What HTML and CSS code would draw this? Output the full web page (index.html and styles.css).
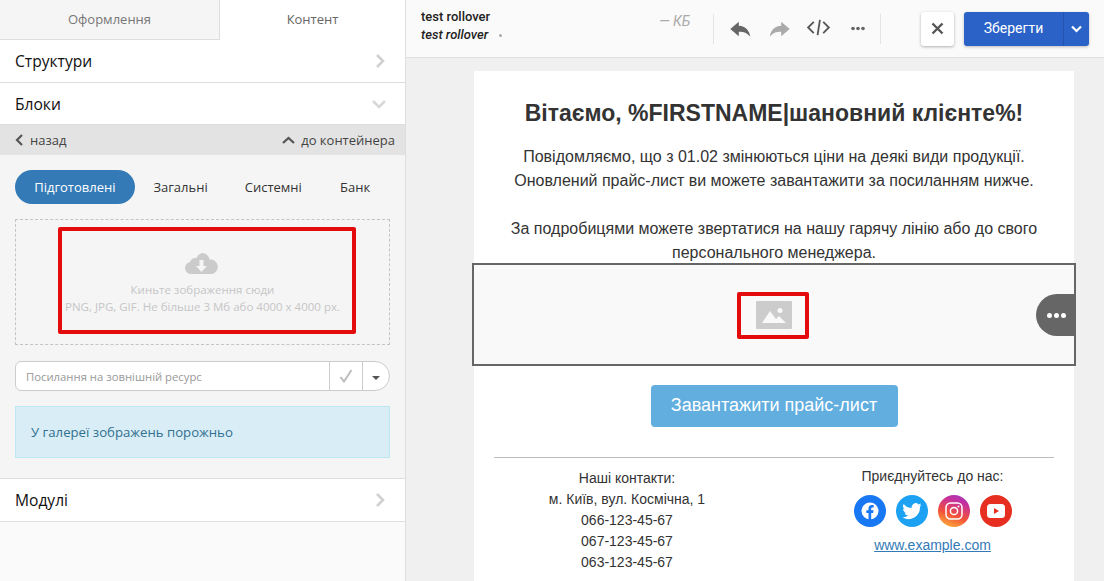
FILE: index.html
```html
<!DOCTYPE html>
<html lang="uk">
<head>
  <meta charset="UTF-8">
  <meta name="viewport" content="width=device-width, initial-scale=1.0">
  <title>Редактор листа</title>
  <link rel="stylesheet" href="styles.css">
</head>
<body>
  <div class="app">
    <aside class="sidebar">
      <div class="tabs">
        <div class="tab">Оформлення</div>
        <div class="tab tab-active">Контент</div>
      </div>

      <div class="section-row">
        <span>Структури</span>
        <svg class="row-arrow" width="12" height="16" viewBox="0 0 12 16"><path d="M3 2l6 6-6 6" fill="none" stroke="#d0d0d0" stroke-width="2.6"/></svg>
      </div>
      <div class="section-row section-open">
        <span>Блоки</span>
        <svg class="row-arrow" width="14" height="12" viewBox="0 0 14 12"><path d="M1 3l6 6 6-6" fill="none" stroke="#d8d8d8" stroke-width="2.6"/></svg>
      </div>

      <div class="nav-bar">
        <span class="nav-item">
          <svg width="9" height="12" viewBox="0 0 9 12"><path d="M7 1L2 6l5 5" fill="none" stroke="#555" stroke-width="2.2"/></svg>
          назад
        </span>
        <span class="nav-item">
          <svg width="13" height="9" viewBox="0 0 13 9"><path d="M1 7l5.5-5L12 7" fill="none" stroke="#555" stroke-width="2.2"/></svg>
          до контейнера
        </span>
      </div>

      <div class="panel">
        <div class="pills">
          <div class="pill pill-active">Підготовлені</div>
          <div class="pill pill-general">Загальні</div>
          <div class="pill pill-system">Системні</div>
          <div class="pill pill-bank">Банк</div>
        </div>

        <div class="dropzone">
          <svg class="cloud" width="33" height="21" viewBox="0 0 33 21">
            <path d="M6 21a6 6 0 0 1-1-11.900A6 6 0 0 1 11.500 5 8 8 0 0 1 17 0a7.500 7.500 0 0 1 7.500 6.500A7.300 7.300 0 0 1 26.500 21z" fill="#cbcbcb"/>
            <path d="M14.500 7h4v6H22l-5.500 6-5.500-6h3.500z" fill="#f5f5f5"/>
          </svg>
          <div>Киньте зображення сюди</div>
          <div>PNG, JPG, GIF. Не більше 3 Мб або 4000 x 4000 px.</div>
        </div>

        <div class="link-field">
          <div class="link-input">Посилання на зовнішній ресурс</div>
          <div class="link-check">
            <svg width="14" height="14" viewBox="0 0 14 14"><path d="M1.500 8l3.500 4.500L12.500 1" fill="none" stroke="#bdbdbd" stroke-width="2"/></svg>
          </div>
          <div class="link-menu"><span class="caret"></span></div>
        </div>

        <div class="alert">У галереї зображень порожньо</div>
      </div>

      <div class="section-row section-modules">
        <span>Модулі</span>
        <svg class="row-arrow" width="12" height="16" viewBox="0 0 12 16"><path d="M3 2l6 6-6 6" fill="none" stroke="#d0d0d0" stroke-width="2.6"/></svg>
      </div>

      <div class="mark mark-drop"></div>
    </aside>

    <main class="workspace">
      <header class="topbar">
        <div class="doc-info">
          <div class="doc-name">test rollover</div>
          <div class="doc-subject">test rollover <span class="doc-dot"></span></div>
        </div>
        <div class="doc-size">— КБ</div>

        <div class="tools">
          <svg class="tool-back" width="23" height="17" viewBox="0 0 26 20"><path d="M11 1L1 9.500 11 18v-5.500c6 0 10 1.500 13.500 6-1-7-5.500-13-13.500-13z" fill="#666"/></svg>
          <svg class="tool-forward" width="23" height="17" viewBox="0 0 26 20"><path d="M15 1l10 8.500L15 18v-5.500c-6 0-10 1.500-13.500 6 1-7 5.500-13 13.500-13z" fill="#aaa"/></svg>
          <svg class="tool-code" width="25" height="17" viewBox="0 0 26 18"><path d="M8 3L2 9l6 6M18 3l6 6-6 6M14.500 1l-2.500 16" fill="none" stroke="#555" stroke-width="1.900"/></svg>
          <svg class="tool-more" width="16" height="5" viewBox="0 0 18 6"><circle cx="3" cy="3" r="2.200" fill="#666"/><circle cx="9" cy="3" r="2.200" fill="#666"/><circle cx="15" cy="3" r="2.200" fill="#666"/></svg>
        </div>

        <div class="close-btn">
          <svg width="13" height="13" viewBox="0 0 13 13"><path d="M1.500 1.500l10 10M11.500 1.500l-10 10" stroke="#555" stroke-width="2.400"/></svg>
        </div>
        <div class="save-btn">
          <div class="save-label">Зберегти</div>
          <div class="save-menu">
            <svg width="11" height="8" viewBox="0 0 11 8"><path d="M1 1.500l4.500 4.500L10 1.500" fill="none" stroke="#fff" stroke-width="2.200"/></svg>
          </div>
        </div>
      </header>

      <div class="canvas">
        <div class="email">
          <div class="email-body">
            <h1 class="email-title">Вітаємо, %FIRSTNAME|шановний клієнте%!</h1>
            <p class="email-text">Повідомляємо, що з 01.02 змінюються ціни на деякі види продукції.<br>Оновлений прайс-лист ви можете завантажити за посиланням нижче.</p>
            <p class="email-text email-text-gap">За подробицями можете звертатися на нашу гарячу лінію або до свого<br>персонального менеджера.</p>
          </div>

          <div class="image-block">
            <svg width="36" height="28" viewBox="0 0 36 28">
              <rect width="36" height="28" rx="1" fill="#cccccc"/>
              <path d="M6 22l8-12 6 8 3-3 7 7z" fill="#f9f9f9"/>
              <circle cx="24" cy="9.500" r="2.500" fill="#f9f9f9"/>
            </svg>
            <div class="block-menu">
              <span></span><span></span><span></span>
            </div>
            <div class="mark mark-image"></div>
          </div>

          <div class="cta-wrap"><div class="cta">Завантажити прайс-лист</div></div>

          <div class="email-footer">
            <div class="contacts">
              <div>Наші контакти:</div>
              <div>м. Київ, вул. Космічна, 1</div>
              <div>066-123-45-67</div>
              <div>067-123-45-67</div>
              <div>063-123-45-67</div>
            </div>
            <div class="social">
              <div>Приєднуйтесь до нас:</div>
              <div class="social-icons">
                <div class="social-icon icon-fb">
                  <svg width="20" height="20" viewBox="0 0 20 20"><circle cx="10" cy="10" r="8.500" fill="#fff"/><path d="M8.500 19v-7H6.300V9.300h2.200V7.500c0-2.300 1.300-3.500 3.300-3.500.9 0 1.900.2 1.900.2v2.200h-1.100c-1.100 0-1.400.7-1.400 1.300v1.600h2.400l-.4 2.700h-2V19z" fill="#1877f2"/></svg>
                </div>
                <div class="social-icon icon-tw">
                  <svg width="20" height="18" viewBox="0 0 20 18"><path d="M19.500 3a8 8 0 0 1-2.200.6A4 4 0 0 0 19 1.400a8 8 0 0 1-2.500 1A4 4 0 0 0 9.700 6 11 11 0 0 1 1.700 1.900a4 4 0 0 0 1.200 5.300 4 4 0 0 1-1.800-.5 4 4 0 0 0 3.200 4 4 4 0 0 1-1.800.1 4 4 0 0 0 3.700 2.800A8 8 0 0 1 .5 15.200 11.300 11.300 0 0 0 17.900 5.100 8 8 0 0 0 19.500 3z" fill="#fff"/></svg>
                </div>
                <div class="social-icon icon-ig">
                  <svg width="18" height="18" viewBox="0 0 18 18"><rect x="1" y="1" width="16" height="16" rx="4.500" fill="none" stroke="#fff" stroke-width="1.500"/><circle cx="9" cy="9" r="3.600" fill="none" stroke="#fff" stroke-width="1.500"/><circle cx="13.500" cy="4.500" r="1" fill="#fff"/></svg>
                </div>
                <div class="social-icon icon-yt">
                  <svg width="18" height="14" viewBox="0 0 18 14"><rect width="18" height="14" rx="3.500" fill="#fff"/><path d="M7 4l5 3-5 3z" fill="#e62f20"/></svg>
                </div>
              </div>
              <a class="site-link" href="#">www.example.com</a>
            </div>
          </div>
        </div>
      </div>
    </main>
  </div>
</body>
</html>
```

FILE: styles.css
```css
html, body {
  margin: 0;
  padding: 0;
  height: 100%;
  overflow: hidden;
}

.app {
  display: flex;
  width: 1104px;
  height: 581px;
  overflow: hidden;
}

/* sidebar */
.sidebar {
  position: relative;
  width: 405px;
  height: 581px;
  flex: none;
  background: #fafafa;
  border-right: 1px solid #dedede;
  font-family: "Open Sans", sans-serif;
}

.tabs {
  display: flex;
  height: 40px;
}

.tab {
  width: 220px;
  background: #f5f5f5;
  border-bottom: 1px solid #dedede;
  border-right: 1px solid #dedede;
  box-sizing: border-box;
  color: #777;
  font-size: 13px;
  line-height: 38px;
  text-align: center;
}

.tab-active {
  width: 185px;
  background: #fff;
  border: 0;
  color: #666;
}

.section-row {
  display: flex;
  align-items: center;
  justify-content: space-between;
  height: 42px;
  padding: 0 19px 0 15px;
  background: #fff;
  border-bottom: 1px solid #dedede;
  color: #111;
  font-size: 15.6px;
  font-weight: 500;
}

.section-open {
  height: 41px;
}

.section-modules {
  border-top: 1px solid #dedede;
}

.nav-bar {
  display: flex;
  align-items: center;
  justify-content: space-between;
  height: 30px;
  padding: 0 10px 0 15px;
  background: #e3e3e3;
  color: #444;
  font-size: 13px;
}

.nav-item {
  display: flex;
  align-items: center;
  gap: 6px;
}

.panel {
  height: 308px;
  padding: 15px 15px 0;
  background: #f5f5f5;
}

.pills {
  display: flex;
  height: 34px;
}

.pill {
  font-size: 13px;
  line-height: 34px;
  color: #333;
  text-align: center;
}

.pill-active {
  width: 120px;
  background: #337ab7;
  border-radius: 17px;
  color: #fff;
}

.pill-general {
  width: 92px;
}

.pill-system {
  width: 94px;
}

.pill-bank {
  width: 70px;
}

.dropzone {
  display: flex;
  flex-direction: column;
  align-items: center;
  height: 126px;
  box-sizing: border-box;
  margin-top: 15px;
  padding-top: 33px;
  border: 1px dashed #c4c4c4;
  color: #c6c6c6;
  font-size: 11.5px;
  line-height: 17px;
}

.cloud {
  margin-bottom: 7px;
  margin-left: -2px;
}

.link-field {
  display: flex;
  height: 30px;
  margin-top: 16px;
  background: #fff;
  border: 1px solid #ccc;
  border-radius: 6px 15px 15px 6px;
  box-sizing: border-box;
}

.link-input {
  flex: 1;
  padding-left: 10px;
  color: #999;
  font-size: 11.3px;
  line-height: 29px;
}

.link-check {
  display: flex;
  align-items: center;
  justify-content: center;
  width: 32px;
  border-left: 1px solid #ccc;
}

.link-menu {
  display: flex;
  align-items: center;
  justify-content: center;
  width: 26px;
  border-left: 1px solid #ccc;
}

.caret {
  margin-top: 3px;
  border-top: 4px solid #555;
  border-left: 4px solid transparent;
  border-right: 4px solid transparent;
}

.alert {
  height: 52px;
  box-sizing: border-box;
  margin-top: 15px;
  padding-left: 15px;
  background: #d9edf7;
  border: 1px solid #bce8f1;
  color: #31708f;
  font-size: 13.2px;
  line-height: 50px;
}

.mark {
  position: absolute;
  box-sizing: border-box;
  border: 4px solid #e30b0b;
  border-radius: 2px;
}

.mark-drop {
  left: 58px;
  top: 227px;
  width: 298px;
  height: 107px;
}

/* top bar */
.workspace {
  flex: 1;
  min-width: 0;
  display: flex;
  flex-direction: column;
}

.topbar {
  display: flex;
  align-items: center;
  height: 57px;
  flex: none;
  background: #fafafa;
  border-bottom: 1px solid #dedede;
  font-family: Roboto, sans-serif;
  color: #222;
}

.doc-info {
  width: 120px;
  margin-left: 15px;
  padding-bottom: 5px;
  font-size: 13px;
  font-weight: 500;
  line-height: 18px;
}

.doc-subject {
  font-style: italic;
}

.doc-dot {
  display: inline-block;
  width: 3px;
  height: 3px;
  margin-left: 8px;
  margin-bottom: 2px;
  border-radius: 50%;
  background: #aaa;
}

.doc-size {
  width: 55px;
  margin: -16px 0 0 118px;
  color: #aaa;
  font-size: 14px;
  font-style: italic;
}

.tools {
  display: flex;
  align-items: center;
  box-sizing: border-box;
  width: 168px;
  height: 30px;
  margin-left: -1px;
  padding-left: 15px;
  border-left: 1px solid #e4e4e4;
  border-right: 1px solid #e4e4e4;
}

.tool-back {
  margin-top: 1px;
}

.tool-forward {
  margin-top: 1px;
  margin-left: 16px;
}

.tool-code {
  margin-top: -3px;
  margin-left: 15px;
}

.tool-more {
  margin-left: 19px;
}

.close-btn {
  display: flex;
  align-items: center;
  justify-content: center;
  width: 33px;
  height: 34px;
  margin-left: 40px;
  background: #fff;
  border-radius: 3px;
  box-shadow: 0 1px 3px rgba(0, 0, 0, 0.3);
}

.save-btn {
  display: flex;
  height: 34px;
  margin-left: 10px;
  background: #2b62c8;
  border-radius: 3px;
  box-shadow: 0 1px 3px rgba(0, 0, 0, 0.25);
  color: #fff;
}

.save-label {
  width: 99px;
  font-size: 14px;
  line-height: 32px;
  text-align: center;
}

.save-menu {
  display: flex;
  align-items: center;
  justify-content: center;
  width: 25px;
  border-left: 1px solid #2454ad;
}

/* email preview */
.canvas {
  flex: 1;
  padding-top: 13px;
  background: #f0f0f0;
  overflow: hidden;
}

.email {
  position: relative;
  width: 600px;
  margin-left: 68px;
  padding-bottom: 30px;
  background: #fff;
  color: #333;
  font-family: "Liberation Sans", Arial, sans-serif;
}

.email-body {
  height: 193px;
  padding-top: 29px;
  box-sizing: border-box;
  text-align: center;
}

.email-title {
  margin: 0 0 19px;
  font-size: 23px;
  font-weight: 700;
  line-height: 26px;
}

.email-text {
  margin: 0;
  font-size: 16px;
  line-height: 24px;
}

.email-text-gap {
  margin-top: 24px;
}

.image-block {
  position: relative;
  display: flex;
  align-items: center;
  justify-content: center;
  box-sizing: border-box;
  height: 103px;
  margin: -1px -2px 0;
  background: #f9f9f9;
  border: 2px solid #666;
}

.block-menu {
  position: absolute;
  right: -2px;
  top: 29px;
  display: flex;
  align-items: center;
  justify-content: center;
  gap: 2px;
  width: 40px;
  height: 42px;
  background: #666;
  border-radius: 21px 0 0 21px;
}

.block-menu span {
  width: 5px;
  height: 5px;
  border-radius: 50%;
  background: #fff;
}

.mark-image {
  left: 263px;
  top: 27px;
  width: 72px;
  height: 47px;
}

.cta-wrap {
  display: flex;
  justify-content: center;
  padding-top: 19px;
}

.cta {
  width: 247px;
  height: 42px;
  background: #62aedf;
  border-radius: 4px;
  color: #fff;
  font-size: 18px;
  line-height: 41px;
  text-align: center;
}

.email-footer {
  display: flex;
  margin: 30px 20px 0;
  padding-top: 10px;
  border-top: 1px solid #bbb;
  font-size: 14px;
  line-height: 21px;
}

.contacts {
  width: 266px;
  text-align: center;
}

.social {
  flex: 1;
  margin-top: -2px;
  padding-left: 51px;
  text-align: center;
}

.social-icons {
  display: flex;
  justify-content: center;
  gap: 10px;
  margin: 8px 0 8px;
}

.social-icon {
  display: flex;
  align-items: center;
  justify-content: center;
  width: 32px;
  height: 32px;
  border-radius: 50%;
}

.icon-fb {
  background: #1877f2;
}

.icon-tw {
  background: #1da1f2;
}

.icon-ig {
  background: linear-gradient(20deg, #fdb43a 5%, #f2503a 40%, #c52f9e 75%, #9a3bc0 100%);
}

.icon-yt {
  background: #e62f20;
}

.site-link {
  color: #337ab7;
}
```
